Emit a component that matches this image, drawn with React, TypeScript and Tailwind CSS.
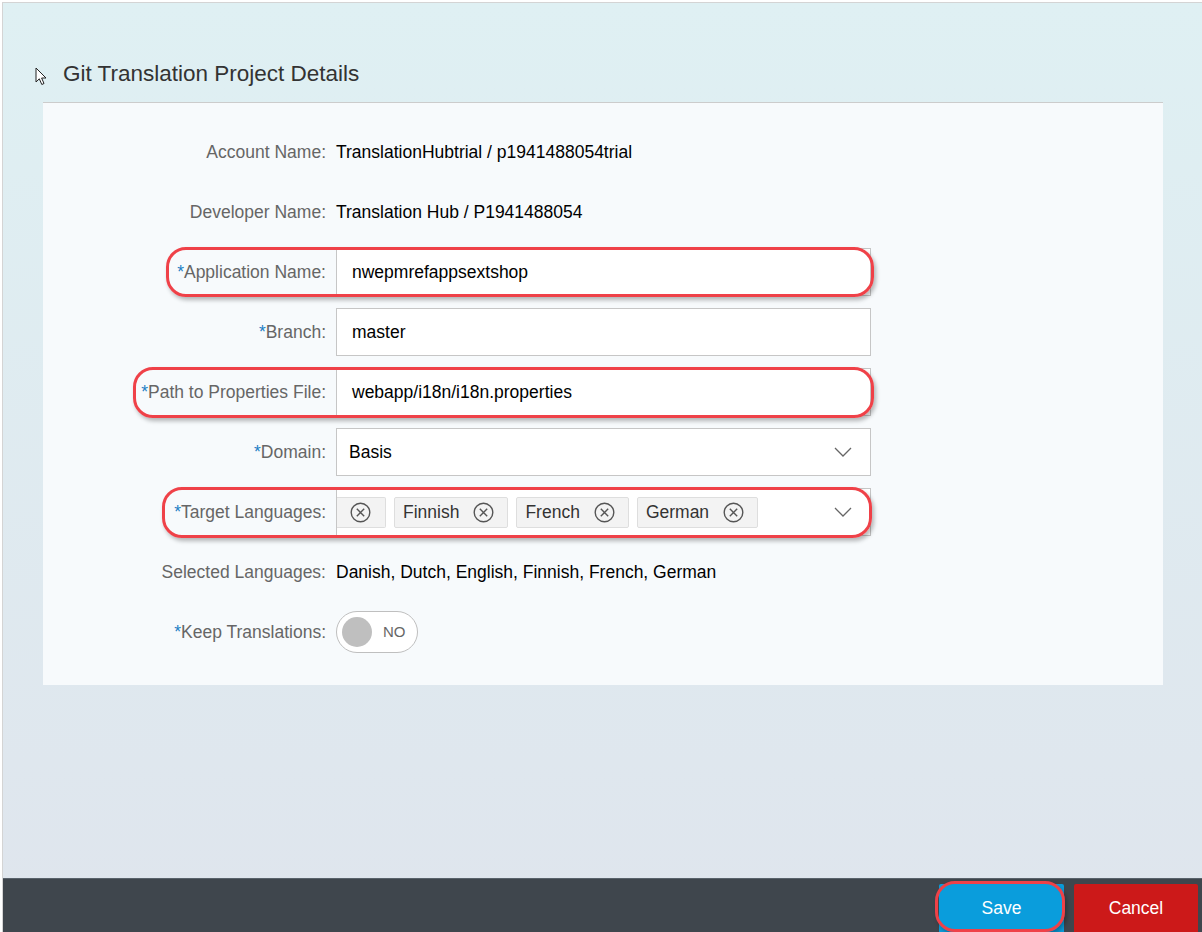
import React from "react";

const FONT = { fontFamily: '"Liberation Sans", Arial, sans-serif' };

function Label({ text, req }: { text: string; req?: boolean }) {
  return (
    <div className="w-[293px] shrink-0 pr-[10px] text-right text-[17.5px] text-[#666]">
      {req && <span className="text-[#1d7fc4]">*</span>}
      {text}
    </div>
  );
}

function Highlight({ className }: { className: string }) {
  return (
    <div
      className={`pointer-events-none absolute rounded-[20px] border-[3px] border-[#ef4148] shadow-[2px_3px_4px_rgba(0,0,0,0.28)] ${className}`}
    />
  );
}

function Chevron() {
  return (
    <svg width="18" height="10" viewBox="0 0 18 10" className="shrink-0">
      <path d="M1 1 L9 9 L17 1" fill="none" stroke="#666" strokeWidth="1.3" />
    </svg>
  );
}

function CloseCircle() {
  return (
    <svg width="21" height="21" viewBox="0 0 21 21" className="shrink-0">
      <circle cx="10.5" cy="10.5" r="9.3" fill="none" stroke="#555" strokeWidth="1.4" />
      <path d="M6.8 6.8 L14.2 14.2 M14.2 6.8 L6.8 14.2" stroke="#555" strokeWidth="1.4" />
    </svg>
  );
}

function Token({ text }: { text: string }) {
  return (
    <div className="flex h-[31px] shrink-0 items-center rounded-[2px] border border-[#dedede] bg-[#f3f3f3] pl-[8px] pr-[13px] text-[17.5px] text-[#333]">
      <span className="mr-[14px]">{text}</span>
      <CloseCircle />
    </div>
  );
}

const rowCls = "relative flex h-[48px] items-center";
const inputCls =
  "flex h-[48px] w-[535px] items-center border border-[#c6c6c6] bg-white text-[17.5px] text-black";

export default function App() {
  return (
    <div style={FONT} className="h-[932px] w-[1202px] overflow-hidden bg-white pl-[2px] pt-[2px]">
      <div className="flex h-[930px] flex-col border-l border-t border-[#d4d4d4] bg-gradient-to-b from-[#dff0f3] to-[#dfe5ed]">
        <div className="flex h-[99px] shrink-0 items-start pl-[32px] pt-[58px]">
          <svg width="13" height="19" viewBox="0 0 13 19" className="mt-[6px]">
            <path
              d="M1 1 L1 15 L4.3 11.8 L6.8 17.5 L9 16.5 L6.6 11 L11 11 Z"
              fill="#fff"
              stroke="#222"
              strokeWidth="1"
              strokeLinejoin="round"
            />
          </svg>
          <h1 className="ml-[15px] text-[22.5px] leading-[26px] text-[#333]">
            Git Translation Project Details
          </h1>
        </div>

        <div className="flex-1">
          <div className="ml-[40px] flex w-[1120px] flex-col gap-[12px] border-t border-[#cccccc] bg-[#f7fafc] pb-[29px] pt-[25px]">
            <div className={rowCls}>
              <Label text="Account Name:" />
              <span className="text-[17.5px] text-black">TranslationHubtrial / p1941488054trial</span>
            </div>
            <div className={rowCls}>
              <Label text="Developer Name:" />
              <span className="text-[17.5px] text-black">Translation Hub / P1941488054</span>
            </div>
            <div className={rowCls}>
              <Label text="Application Name:" req />
              <div className={`${inputCls} pl-[15px]`}>nwepmrefappsextshop</div>
              <Highlight className="left-[123px] top-[-1px] h-[50px] w-[708px]" />
            </div>
            <div className={rowCls}>
              <Label text="Branch:" req />
              <div className={`${inputCls} pl-[15px]`}>master</div>
            </div>
            <div className={rowCls}>
              <Label text="Path to Properties File:" req />
              <div className={`${inputCls} border-[#0a6ed1] pl-[15px]`}>webapp/i18n/i18n.properties</div>
              <Highlight className="left-[90px] top-[-1px] h-[51px] w-[741px]" />
            </div>
            <div className={rowCls}>
              <Label text="Domain:" req />
              <div className={`${inputCls} justify-between pl-[12px] pr-[18px]`}>
                <span>Basis</span>
                <Chevron />
              </div>
            </div>
            <div className={rowCls}>
              <Label text="Target Languages:" req />
              <div className={`${inputCls} justify-between pr-[18px]`}>
                <div className="flex items-center gap-[8px] overflow-hidden">
                  <div className="flex h-[31px] w-[49px] shrink-0 items-center justify-end rounded-r-[2px] border-y border-r border-[#dedede] bg-[#f3f3f3] pr-[14px]">
                    <CloseCircle />
                  </div>
                  <Token text="Finnish" />
                  <Token text="French" />
                  <Token text="German" />
                </div>
                <Chevron />
              </div>
              <Highlight className="left-[119px] top-[-1px] h-[51px] w-[710px]" />
            </div>
            <div className={rowCls}>
              <Label text="Selected Languages:" />
              <span className="text-[17.5px] text-black">Danish, Dutch, English, Finnish, French, German</span>
            </div>
            <div className={rowCls}>
              <Label text="Keep Translations:" req />
              <div className="flex h-[42px] w-[82px] items-center rounded-full border border-[#bfbfbf] bg-white pl-[5px]">
                <div className="h-[30px] w-[30px] rounded-full bg-[#bfbfbf]" />
                <span className="ml-[11px] text-[15px] text-[#666]">NO</span>
              </div>
            </div>
          </div>
        </div>

        <div className="relative flex h-[54px] shrink-0 items-end justify-end gap-[10px] border-t border-[#59626b] bg-[#3f464d] pr-[4px]">
          <button className="h-[48px] w-[125px] rounded-t-[2px] bg-[#0a9ddc] text-[17.5px] text-white">
            Save
          </button>
          <button className="h-[48px] w-[124px] rounded-t-[2px] bg-[#cc1919] text-[17.5px] text-white">
            Cancel
          </button>
          <Highlight className="left-[932px] top-[2px] h-[51px] w-[130px] rounded-[15px]" />
        </div>
      </div>
    </div>
  );
}
